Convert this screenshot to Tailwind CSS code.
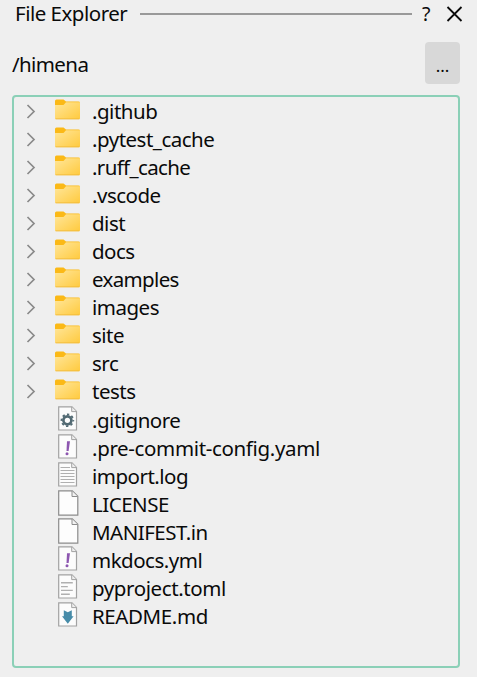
<!DOCTYPE html>
<html lang="en">
<head>
<meta charset="utf-8">
<title>File Explorer</title>
<script src="https://cdn.jsdelivr.net/npm/@tailwindcss/browser@4"></script>
</head>
<body class="w-[477px] h-[677px] overflow-hidden bg-[#efefef] text-[#0a0a0a] font-['Noto_Sans','Open_Sans',sans-serif] text-[20.5px] tracking-[-0.5px] leading-[28px] flex flex-col">
<svg class="absolute h-0 w-0">
  <defs>
    <linearGradient id="fg" x1="0" y1="0" x2="1" y2="1"><stop offset="0" stop-color="#ffe69a"/><stop offset="1" stop-color="#ffca3e"/></linearGradient>
    <symbol id="folder" viewBox="0 0 25 21"><path d="M0 2Q0 .5 1.500 .5H8.500L11 2.600H23.500Q25 2.600 25 4V10H0Z" fill="#fbb917"/><path d="M0 6H8.500L11 3.300H25V19Q25 20.200 23.800 20.200H1.200Q0 20.200 0 19Z" fill="url(#fg)"/><path d="M.5 19.800H24.500" stroke="#f0b93a" stroke-width=".8"/></symbol>
    <symbol id="page" viewBox="0 0 21 26"><path d="M.7 .9H14L18.500 5.400V24H.7Z" fill="#fcfcfc" stroke="#a2a2a2" stroke-width="1.200"/><path d="M13.700 1V5.600H18.300" fill="#eee" stroke="#a2a2a2"/></symbol>
    <symbol id="blank" viewBox="0 0 21 26"><path d="M.7 .8H14.300L19.800 6.300V25.200H.7Z" fill="#fdfdfd" stroke="#8c8c8c" stroke-width="1.200"/><path d="M14 1V6.500H19.600" fill="#f2f2f2" stroke="#8c8c8c"/></symbol>
    <symbol id="gear" viewBox="0 0 21 26"><use href="#page"/><circle cx="9.400" cy="14.300" r="4" fill="none" stroke="#526a73" stroke-width="2.700"/><circle cx="9.400" cy="14.300" r="5.900" fill="none" stroke="#526a73" stroke-width="1.800" stroke-dasharray="2.320 2.313" stroke-dashoffset="1.160"/></symbol>
    <symbol id="yaml" viewBox="0 0 21 26"><use href="#page"/><path d="M9 7.300H12L10.600 17H8.500Z" fill="#8d57b0"/><circle cx="9" cy="19.700" r="1.500" fill="#8d57b0"/></symbol>
    <symbol id="log" viewBox="0 0 21 26"><use href="#page"/><path d="M2.500 5.500H12M2.500 8.500H16.500M2.500 11.500H16.500M2.500 14.500H16.500M2.500 17.500H16.500M2.500 20.500H16.500" stroke="#b0b0b0" stroke-width="1.100"/></symbol>
    <symbol id="toml" viewBox="0 0 21 26"><use href="#page"/><path d="M3 8.700H14.800M3 12.600H9.800M3 16.400H14.800M3 20.300H11.800" stroke="#b0b0b0" stroke-width="1.400"/></symbol>
    <symbol id="md" viewBox="0 0 21 26"><use href="#page"/><path d="M5.800 8.200L9.800 10.200L13.800 8.200V14.300H15.600L9.800 21.800L4 14.300H5.800Z" fill="#468ba8"/></symbol>
  </defs>
</svg>
<header class="flex h-[28px] items-center pl-[15px] pr-[14px]">
  <h1 class="w-[125px] shrink-0 whitespace-nowrap pb-[2px]">File Explorer</h1>
  <div class="h-[2px] w-[272px] bg-[#999]"></div>
  <div class="w-[34px] pl-[10px] text-[19.5px]">?</div>
  <svg class="h-[16px] w-[17px]" viewBox="0 0 17 16"><path d="M1.500 1L15.500 15M15.500 1L1.500 15" stroke="#0a0a0a" stroke-width="1.800"/></svg>
</header>
<div class="mt-[14px] flex h-[42px] items-center justify-between pl-[12px] pr-[17px]">
  <div class="mt-px tracking-[-0.6px]">/himena</div>
  <button class="h-[42px] w-[35px] rounded-[4px] bg-[#d8d8d8] pt-[5px] text-[17px] leading-[30px] tracking-normal">...</button>
</div>
<ul id="tree" class="ml-[12px] mt-[11px] h-[573px] w-[448px] rounded-[4px] border-2 border-[#8bd0b7] pt-px"></ul>
<script>
const rows = [['folder','.github'],['folder','.pytest_cache'],['folder','.ruff_cache'],['folder','.vscode'],['folder','dist'],['folder','docs'],['folder','examples'],['folder','images'],['folder','site'],['folder','src'],['folder','tests'],['gear','.gitignore'],['yaml','.pre-commit-config.yaml'],['log','import.log'],['blank','LICENSE'],['blank','MANIFEST.in'],['yaml','mkdocs.yml'],['toml','pyproject.toml'],['md','README.md']];
const tracking = {'.pre-commit-config.yaml':'tracking-[-0.35px]', '.ruff_cache':'tracking-[-0.65px]', 'examples':'tracking-[-0.65px]', 'pyproject.toml':'tracking-[-0.4px]', 'README.md':'tracking-[-0.4px]'};
const arrow = '<svg class="ml-[12px] mt-[6px] h-[15px] w-[10px] shrink-0" viewBox="0 0 10 15"><path d="M1.500 1L8 7.500L1.500 14" fill="none" stroke="#8a8a8a" stroke-width="1.700"/></svg>';
document.getElementById('tree').innerHTML = rows.map(([icon, name]) => {
  const dir = icon === 'folder';
  return '<li class="flex h-[28px] items-start">' + (dir ? arrow : '<span class="ml-[12px] w-[10px] shrink-0"></span>')
    + '<span class="flex w-[56px] shrink-0 ' + (dir ? 'pl-[19px] pt-px' : 'pl-[22px]') + '"><svg class="' + (dir ? 'h-[21px] w-[25px]' : 'h-[26px] w-[21px]') + '"><use href="#' + icon + '"/></svg></span>'
    + '<span class="whitespace-nowrap ' + (dir ? 'leading-[27px] ' : 'leading-[29px] ') + (tracking[name] || '') + '">' + name + '</span></li>';
}).join('');
</script>
</body>
</html>
